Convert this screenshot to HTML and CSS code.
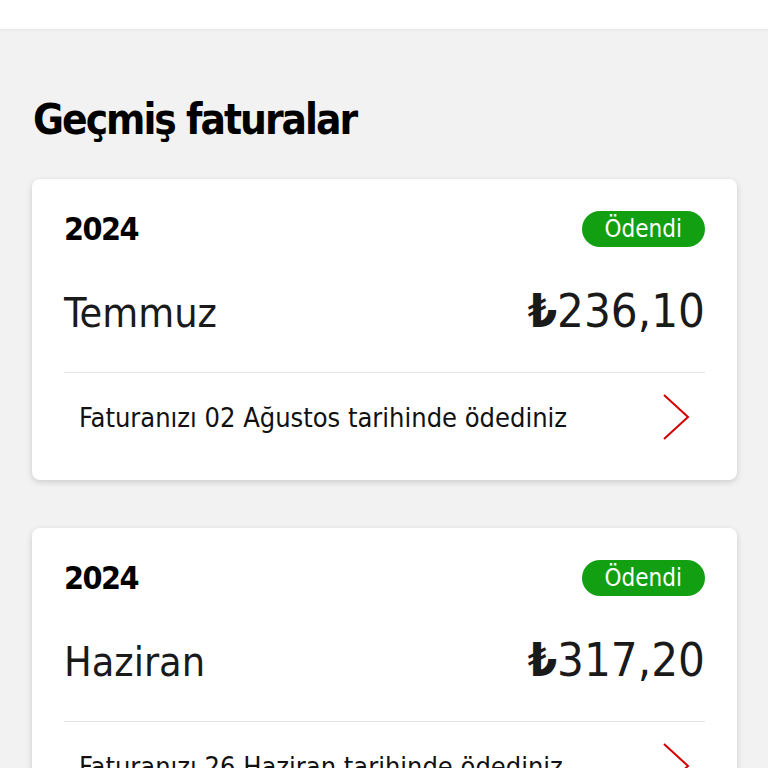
FILE: index.html
```html
<!DOCTYPE html>
<html lang="tr">
<head>
  <meta charset="utf-8">
  <title>Geçmiş faturalar</title>
  <meta name="viewport" content="width=device-width, initial-scale=1">
  <link rel="stylesheet" href="styles.css">
</head>
<body>
  <header class="topbar"></header>
  <main class="page">
    <h1>Geçmiş faturalar</h1>
    <ul class="bills">
      <li class="bill">
        <div class="bill-head">
          <span class="year">2024</span>
          <span class="status">Ödendi</span>
        </div>
        <div class="bill-main">
          <span class="month">Temmuz</span>
          <span class="amount"><span class="cur">₺</span>236,10</span>
        </div>
        <a class="bill-foot" href="#">
          <span>Faturanızı 02 Ağustos tarihinde ödediniz</span>
          <svg class="chevron" viewBox="0 0 28 48" width="28" height="48"><path d="M2 2 L26 24 L2 46"/></svg>
        </a>
      </li>
      <li class="bill">
        <div class="bill-head">
          <span class="year">2024</span>
          <span class="status">Ödendi</span>
        </div>
        <div class="bill-main">
          <span class="month">Haziran</span>
          <span class="amount"><span class="cur">₺</span>317,20</span>
        </div>
        <a class="bill-foot" href="#">
          <span>Faturanızı 26 Haziran tarihinde ödediniz</span>
          <svg class="chevron" viewBox="0 0 28 48" width="28" height="48"><path d="M2 2 L26 24 L2 46"/></svg>
        </a>
      </li>
    </ul>
  </main>
</body>
</html>
```

FILE: styles.css
```css
*, *:before, *:after {
  box-sizing: inherit;
}
html {
  box-sizing: border-box;
  height: 100%;
}
html, body {
  background: #f2f2f2;
  font-family: "DejaVu Sans Condensed", "Liberation Sans Narrow", Roboto, sans-serif;
  color: #000;
  margin: 0;
  padding: 0;
  overflow: hidden;
}
.topbar {
  height: 29px;
  background: #fff;
  box-shadow: 0 1px 3px rgba(0, 0, 0, .06);
}
.page {
  padding: 0 31px 0 32px;
}
h1 {
  margin: 0;
  padding: 66px 0 34px 1px;
  font-size: 42px;
  line-height: 50px;
  font-weight: bold;
  letter-spacing: -2px;
}
.bills {
  list-style: none;
  margin: 0;
  padding: 0;
  display: flex;
  flex-direction: column;
  gap: 48px;
}
.bill {
  background: #fff;
  border-radius: 8px;
  box-shadow: 0 2px 6px rgba(0, 0, 0, .16);
  padding: 32px 32px 19px;
}
.bill-head {
  display: flex;
  justify-content: space-between;
  align-items: center;
  height: 36px;
}
.year {
  font-size: 32px;
  font-weight: bold;
  letter-spacing: -1.5px;
}
.status {
  background: #12a012;
  color: #fff;
  font-size: 24px;
  line-height: 36px;
  padding: 0 23px;
  border-radius: 18px;
}
.bill-main {
  display: flex;
  justify-content: space-between;
  align-items: baseline;
  padding: 36px 0 31px;
  line-height: 56px;
  color: #1a1a1a;
}
.month {
  font-size: 41px;
  font-weight: 300;
}
.amount {
  font-size: 47px;
  font-weight: 300;
}
.cur {
  font-weight: bold;
}
.bill-foot {
  display: flex;
  justify-content: space-between;
  align-items: center;
  height: 89px;
  padding: 0 15px;
  border-top: 1px solid #e4e4e4;
  color: #111;
  text-decoration: none;
  font-size: 27px;
}
.chevron {
  fill: none;
  stroke: #d40000;
  stroke-width: 2;
}
```
